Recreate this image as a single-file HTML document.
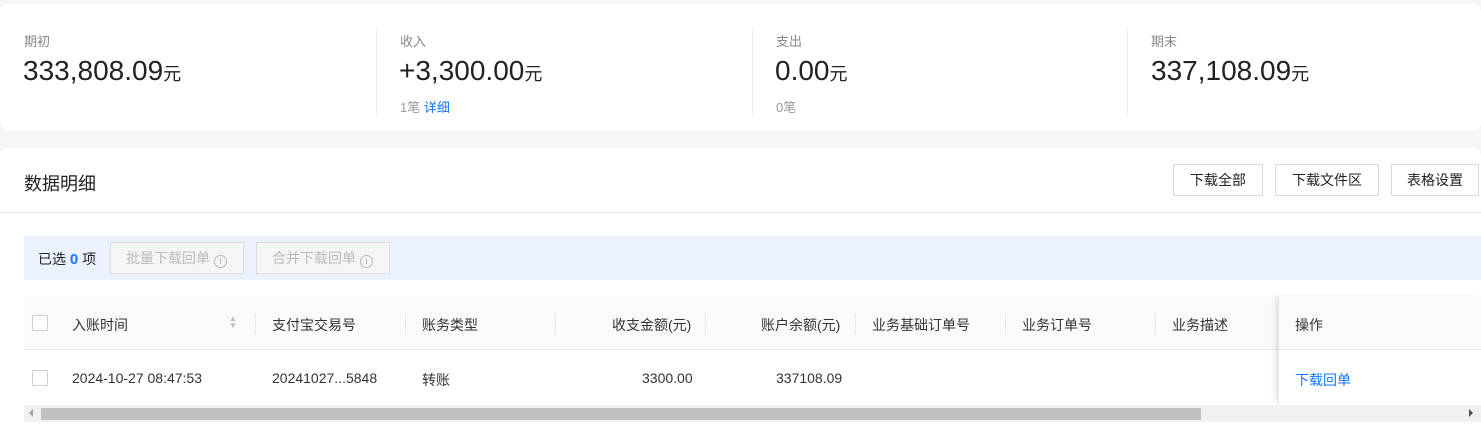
<!DOCTYPE html>
<html><head><meta charset="utf-8"><style>
*{margin:0;padding:0;box-sizing:border-box}
body{width:1481px;height:446px;background:#f5f5f5;font-family:"Liberation Sans","Noto Sans CJK SC",sans-serif;position:relative;overflow:hidden;color:#333}
.a{position:absolute;white-space:nowrap}
.card{position:absolute;background:#fff;border-radius:8px}
.lbl{font-size:13px;color:#888}
.big{font-size:28px;color:#222}
.big span{font-size:18px}
.sub{font-size:13px;color:#999}
.vl{position:absolute;width:1px;background:#eee}
.btn{position:absolute;top:164px;height:32px;border:1px solid #d9d9d9;border-radius:2px;background:#fff;font-size:14px;color:#222;text-align:center;line-height:30px}
.dbtn{position:absolute;top:242px;height:32px;border:1px solid #ddd;background:#f5f5f5;font-size:14px;color:#bbb;line-height:30px;padding-left:15px}
.i{display:inline-block;width:13px;height:13px;border:1px solid #bbb;border-radius:50%;font-size:9px;line-height:11px;text-align:center;vertical-align:-1px;margin-left:4px;color:#aaa}
.th{font-size:14px;color:#333;top:315px}
.td{font-size:14px;color:#333;top:370px}
.sep{position:absolute;top:313px;width:1px;height:22px;background:#e8e8e8}
.cb{position:absolute;left:32px;width:16px;height:16px;border:1px solid #ccc;border-radius:2px;background:#fff}
</style></head><body>
<div class="card" style="left:0;top:4px;width:1481px;height:127px"></div>
<div class="a lbl" style="left:24px;top:31px">期初</div>
<div class="a big" style="left:23px;top:55px">333,808.09<span>元</span></div>
<div class="vl" style="left:376px;top:28px;height:88px"></div>
<div class="a lbl" style="left:400px;top:31px">收入</div>
<div class="a big" style="left:399px;top:55px">+3,300.00<span>元</span></div>
<div class="a sub" style="left:400px;top:97px">1笔 <span style="color:#1677ff">详细</span></div>
<div class="vl" style="left:752px;top:28px;height:88px"></div>
<div class="a lbl" style="left:776px;top:31px">支出</div>
<div class="a big" style="left:775px;top:55px">0.00<span>元</span></div>
<div class="a sub" style="left:776px;top:97px">0笔</div>
<div class="vl" style="left:1127px;top:28px;height:88px"></div>
<div class="a lbl" style="left:1151px;top:31px">期末</div>
<div class="a big" style="left:1151px;top:55px">337,108.09<span>元</span></div>

<div class="card" style="left:0;top:148px;width:1481px;height:300px;border-radius:8px 8px 0 0"></div>
<div class="a" style="left:24px;top:170px;font-size:18px;color:#222">数据明细</div>
<div class="btn" style="left:1173px;width:90px">下载全部</div>
<div class="btn" style="left:1275px;width:104px">下载文件区</div>
<div class="btn" style="left:1391px;width:88px">表格设置</div>
<div class="a" style="left:0;top:212px;width:1481px;height:1px;background:#e8e8e8"></div>

<div class="a" style="left:24px;top:236px;width:1457px;height:44px;background:#ebf2fd"></div>
<div class="a" style="left:38px;top:249px;font-size:14px;color:#222">已选 <b style="color:#1677ff;font-size:15px">0</b> 项</div>
<div class="dbtn" style="left:110px;width:134px">批量下载回单<span class="i">i</span></div>
<div class="dbtn" style="left:256px;width:134px">合并下载回单<span class="i">i</span></div>

<div class="a" style="left:24px;top:296px;width:1457px;height:54px;background:#fafafa;border-bottom:1px solid #ececec"></div>
<div class="cb" style="top:315px"></div>
<div class="a th" style="left:72px">入账时间</div>
<div class="a" style="left:229px;top:315px;font-size:8px;color:#bbb;line-height:7px">▲<br>▼</div>
<div class="sep" style="left:255px"></div>
<div class="a th" style="left:272px">支付宝交易号</div>
<div class="sep" style="left:405px"></div>
<div class="a th" style="left:422px">账务类型</div>
<div class="sep" style="left:555px"></div>
<div class="a th" style="left:612px">收支金额(元)</div>
<div class="sep" style="left:705px"></div>
<div class="a th" style="left:761px">账户余额(元)</div>
<div class="sep" style="left:855px"></div>
<div class="a th" style="left:872px">业务基础订单号</div>
<div class="sep" style="left:1005px"></div>
<div class="a th" style="left:1022px">业务订单号</div>
<div class="sep" style="left:1155px"></div>
<div class="a th" style="left:1172px">业务描述</div>

<div class="cb" style="top:370px"></div>
<div class="a td" style="left:72px">2024-10-27 08:47:53</div>
<div class="a td" style="left:272px">20241027...5848</div>
<div class="a td" style="left:422px">转账</div>
<div class="a td" style="left:642px">3300.00</div>
<div class="a td" style="left:776px">337108.09</div>

<div class="a" style="left:1278px;top:296px;width:203px;height:109px;background:transparent;border-left:1px solid #e8e8e8;box-shadow:-4px 0 6px -2px rgba(0,0,0,0.12)"></div>
<div class="a" style="left:1279px;top:296px;width:202px;height:54px;background:#fafafa;border-bottom:1px solid #ececec"></div>
<div class="a" style="left:1279px;top:351px;width:202px;height:54px;background:#fff"></div>
<div class="a th" style="left:1295px">操作</div>
<div class="a td" style="left:1295px;color:#1677ff">下载回单</div>

<div class="a" style="left:24px;top:405px;width:1457px;height:17px;background:#f1f1f1"></div>
<div class="a" style="left:41px;top:408px;width:1160px;height:12px;background:#c1c1c1"></div>
<div class="a" style="left:29px;top:409px;width:0;height:0;border:4px solid transparent;border-right-color:#a3a3a3;border-left:0"></div>
<div class="a" style="left:1469px;top:409px;width:0;height:0;border:4px solid transparent;border-left-color:#505050;border-right:0"></div>
</body></html>
